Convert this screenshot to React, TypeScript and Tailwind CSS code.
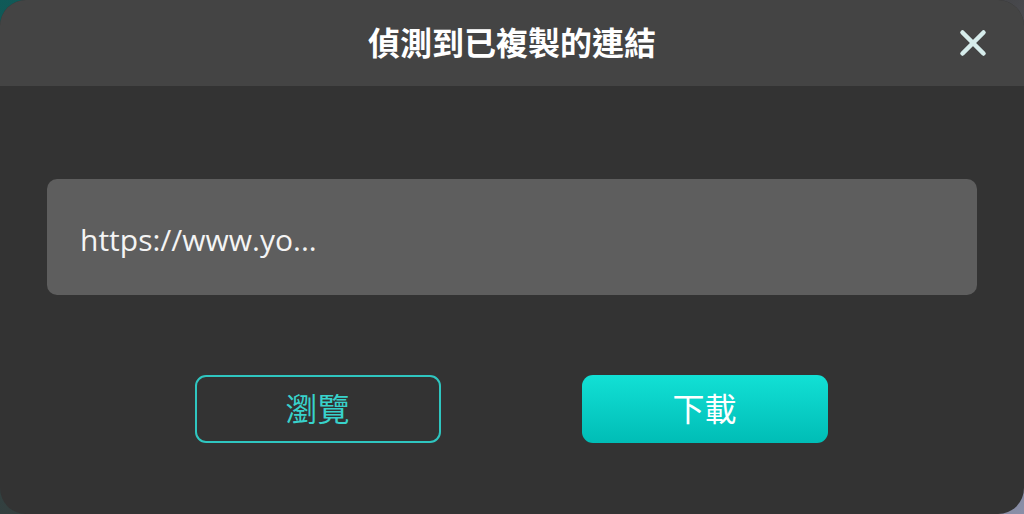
import { X } from "lucide-react";

const CJK = '"Noto Sans", "Noto Sans CJK TC", sans-serif';

export default function App() {
  return (
    <div className="w-[1024px] h-[514px] bg-[linear-gradient(135deg,#0f5a58_0%,#3a3a3a_40%,#3a3a3a_60%,#8a8fa8_100%)]">
      <div className="flex h-full w-full flex-col overflow-hidden rounded-[26px] bg-[#333333]" style={{ fontFamily: CJK }}>
        <div className="relative flex h-[86px] shrink-0 items-center justify-center bg-[#444444]">
          <h1 className="text-[32px] font-bold leading-none text-white">偵測到已複製的連結</h1>
          <button type="button" aria-label="關閉" className="absolute right-[30px] top-[22px] text-[#d6eceb]">
            <X className="h-[42px] w-[42px]" strokeWidth={2.6} />
          </button>
        </div>
        <div className="flex flex-1 flex-col px-[47px] pt-[93px]">
          <div className="flex h-[116px] items-center rounded-[10px] bg-[#5e5e5e] px-[33px]">
            <span className="mt-[4px] text-[30px] text-[#f4f4f4]" style={{ fontFamily: '"Open Sans", "Noto Sans", sans-serif' }}>
              https://www.yo...
            </span>
          </div>
          <div className="mt-[80px] flex justify-center gap-[141px] pr-[2px]">
            <button
              type="button"
              className="flex h-[68px] w-[246px] items-center justify-center rounded-[11px] border-2 border-[#2fc6c0] text-[32px] text-[#38d2cb]"
            >
              瀏覽
            </button>
            <button
              type="button"
              className="flex h-[68px] w-[246px] items-center justify-center rounded-[11px] bg-[linear-gradient(180deg,#12e0d5,#00bdb6)] text-[32px] text-white"
            >
              下載
            </button>
          </div>
        </div>
      </div>
    </div>
  );
}
